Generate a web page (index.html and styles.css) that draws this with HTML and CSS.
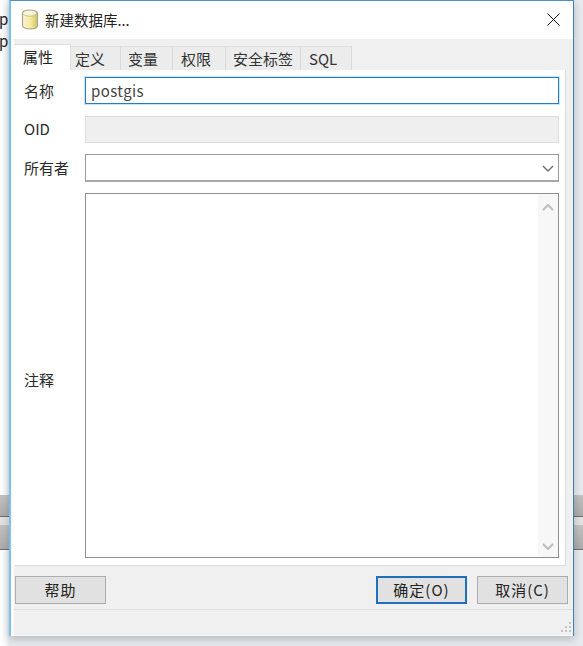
FILE: index.html
```html
<!DOCTYPE html>
<html lang="zh">
<head>
<meta charset="utf-8">
<title>新建数据库...</title>
<link rel="stylesheet" href="styles.css">
</head>
<body>
<div class="desktop">
  <div class="behind">
    <div class="behind-text">p</div>
    <div class="behind-text">p</div>
    <div class="behind-bars">
      <div class="bar bar-a"></div>
      <div class="bar bar-b"></div>
    </div>
  </div>
  <div class="dialog">
    <div class="titlebar">
      <svg class="db-icon" viewBox="0 0 18 21" width="18" height="21" aria-hidden="true">
        <defs>
          <linearGradient id="cyl" x1="0" x2="1" y1="0" y2="0">
            <stop offset="0" stop-color="#f9f6d2"/>
            <stop offset="0.55" stop-color="#f4ea9c"/>
            <stop offset="1" stop-color="#cfc26c"/>
          </linearGradient>
        </defs>
        <path d="M1.500 4.500C1.500 2.300 4.800 1 9 1s7.500 1.300 7.500 3.500v12c0 2.200-3.300 3.500-7.500 3.500s-7.500-1.300-7.500-3.500z" fill="url(#cyl)" stroke="#a8a590" stroke-width="1.200"/>
        <path d="M2 4.500C2.500 6.300 5.500 7.200 9 7.200s6.500-.9 7-2.700" fill="none" stroke="#bdb894" stroke-width="0.800"/>
        <ellipse cx="9" cy="4" rx="6" ry="2.200" fill="#f8f5de"/>
      </svg>
      <span class="title">新建数据库...</span>
      <svg class="close" viewBox="0 0 13 13" width="13" height="13" aria-hidden="true">
        <path d="M.5.500l12 12M12.500.500l-12 12" stroke="#111" stroke-width="1" fill="none"/>
      </svg>
    </div>
    <div class="client">
      <div class="tabs">
        <div class="tab tab-active tab-1">属性</div>
        <div class="tab tab-2">定义</div>
        <div class="tab tab-3">变量</div>
        <div class="tab tab-4">权限</div>
        <div class="tab tab-5">安全标签</div>
        <div class="tab tab-6">SQL</div>
      </div>
      <div class="panel">
        <label class="label">名称</label>
        <div class="field field-focus">postgis</div>
        <label class="label label-oid">OID</label>
        <div class="field field-disabled"></div>
        <label class="label">所有者</label>
        <div class="field field-combo">
          <svg class="chev" viewBox="0 0 12 7" width="12" height="7" aria-hidden="true">
            <path d="M1 1l5 5 5-5" fill="none" stroke="#6d6d6d" stroke-width="1.400"/>
          </svg>
        </div>
        <label class="label label-memo">注释</label>
        <div class="field field-memo">
          <div class="scrollbar">
            <svg viewBox="0 0 12 7" width="12" height="7" aria-hidden="true">
              <path d="M1 6l5-5 5 5" fill="none" stroke="#bdbdbd" stroke-width="2"/>
            </svg>
            <svg viewBox="0 0 12 7" width="12" height="7" aria-hidden="true">
              <path d="M1 1l5 5 5-5" fill="none" stroke="#bdbdbd" stroke-width="2"/>
            </svg>
          </div>
        </div>
      </div>
      <div class="buttons">
        <div class="btn">帮助</div>
        <div class="spacer"></div>
        <div class="btn btn-default">确定(O)</div>
        <div class="btn">取消(C)</div>
      </div>
      <div class="statusbar">
        <svg class="grip" viewBox="0 0 12 12" width="12" height="12" aria-hidden="true">
          <g fill="#c4c4c4">
            <rect x="8" y="0" width="2" height="2"/>
            <rect x="4" y="4" width="2" height="2"/>
            <rect x="8" y="4" width="2" height="2"/>
            <rect x="0" y="8" width="2" height="2"/>
            <rect x="4" y="8" width="2" height="2"/>
            <rect x="8" y="8" width="2" height="2"/>
          </g>
        </svg>
      </div>
    </div>
  </div>
</div>
</body>
</html>
```

FILE: styles.css
```css
* {
  box-sizing: border-box;
}

html,
body {
  margin: 0;
  padding: 0;
}

body {
  font-family: "Noto Sans CJK SC", "Noto Sans", sans-serif;
  font-size: 15px;
  color: #2a2a2a;
  background: #ffffff;
}

.desktop {
  position: relative;
  width: 583px;
  height: 646px;
  overflow: hidden;
}

.behind {
  height: 100%;
  padding-top: 8px;
  background: linear-gradient(to right, #ffffff 0, #f4f6f8 6px, #e6eaee 9px);
}

.behind-text {
  height: 22px;
  line-height: 22px;
  margin-left: -1px;
  font-size: 15px;
  color: #222;
}

.behind-bars {
  margin-top: 443px;
  background: #e2e2e2;
}

.bar {
  border-bottom: 1px solid #6f6f6f;
  background: linear-gradient(to bottom, #c2c2c2, #ababab);
}

.bar-a {
  height: 22px;
}

.bar-b {
  height: 25px;
  margin-top: 8px;
}

/* the dialog is a window floating over the desktop behind it */
.dialog {
  position: absolute;
  left: 9px;
  top: 0;
  width: 565px;
  height: 636px;
  display: flex;
  flex-direction: column;
  background: #f0f0f0;
  border-top: 1px solid #4d8fc4;
  border-left: 2px solid #7cc0ee;
  border-right: 1px solid #3f7fb0;
  box-shadow: 0 3px 8px rgba(0, 0, 0, 0.22);
}

.titlebar {
  flex: none;
  height: 38px;
  display: flex;
  align-items: center;
  padding: 0 13px 1px 10px;
  background: #ffffff;
}

.db-icon {
  flex: none;
  margin-bottom: 1px;
}

.title {
  margin-left: 6px;
  font-size: 14.500px;
  color: #222;
}

.close {
  margin-left: auto;
}

.client {
  flex: 1;
  display: flex;
  flex-direction: column;
  min-height: 0;
  border-left: 3px solid #fbfbfb;
}

.tabs {
  flex: none;
  display: flex;
  align-items: flex-end;
  height: 31px;
}

.tab {
  height: 24px;
  line-height: 24px;
  padding-left: 4px;
  color: #333;
  background: #ececec;
  border-top: 1px solid #e0e0e0;
  border-right: 1px solid #dadada;
}

.tab-active {
  height: 26px;
  padding-left: 9px;
  line-height: 24px;
  background: #ffffff;
  border-color: #dddddd;
  color: #222;
}

.tab-1 {
  width: 57px;
}

.tab-2 {
  width: 50px;
}

.tab-3 {
  width: 52px;
  padding-left: 7px;
}

.tab-4 {
  width: 53px;
  padding-left: 8px;
}

.tab-5 {
  width: 75px;
  padding-left: 7px;
}

.tab-6 {
  width: 51px;
  padding-left: 8px;
}

.panel {
  flex: none;
  width: 552px;
  height: 496px;
  display: grid;
  grid-template-columns: 61px 474px;
  grid-template-rows: repeat(3, 27px) 1fr;
  row-gap: 11.670px;
  align-items: center;
  padding: 7px 0 7px 9px;
  background: #ffffff;
  border-right: 1px solid #dcdcdc;
  border-left: 1px solid #ffffff;
  border-bottom: 1px solid #dcdcdc;
}

.label {
  color: #2a2a2a;
}

.label-oid {
  margin-bottom: 2px;
}

.label-memo {
  margin-top: 8px;
}

.field {
  height: 27px;
  line-height: 25px;
  padding-left: 5px;
  background: #ffffff;
  border: 1px solid #8f8f8f;
}

.field-focus {
  border-color: #2a7cc0;
  box-shadow: 0 0 1px 1px #cbe6fa;
  color: #444;
  letter-spacing: 0.400px;
}

.field-disabled {
  background: #efefef;
  border-color: #dcdcdc;
}

.field-combo {
  display: flex;
  align-items: center;
  justify-content: flex-end;
  align-self: start;
  height: 28px;
  padding-top: 1px;
  padding-right: 4px;
  border-color: #999;
  border-bottom: 2px solid #a8a8a8;
}

.field-memo {
  display: flex;
  justify-content: flex-end;
  height: 100%;
  padding: 0;
}

.scrollbar {
  width: 20px;
  display: flex;
  flex-direction: column;
  align-items: center;
  justify-content: space-between;
  padding: 10px 0 7px;
  background: #f7f7f7;
}

.chev {
  display: block;
}

.buttons {
  flex: none;
  display: flex;
  gap: 10px;
  height: 44px;
  padding: 10px 5px 0 1px;
  border-bottom: 1px solid #dfdfdf;
}

.btn {
  width: 91px;
  height: 28px;
  line-height: 26px;
  text-align: center;
  letter-spacing: 1px;
  background: #e1e1e1;
  border: 1px solid #adadad;
  color: #222;
}

.btn-default {
  border: 2px solid #1f70b8;
  line-height: 24px;
}

.spacer {
  flex: 1;
}

.statusbar {
  flex: 1;
  display: flex;
  justify-content: flex-end;
  align-items: flex-end;
  padding-bottom: 1px;
  border-bottom: 1px solid #f8f8f8;
}

.grip {
  display: block;
}
```
